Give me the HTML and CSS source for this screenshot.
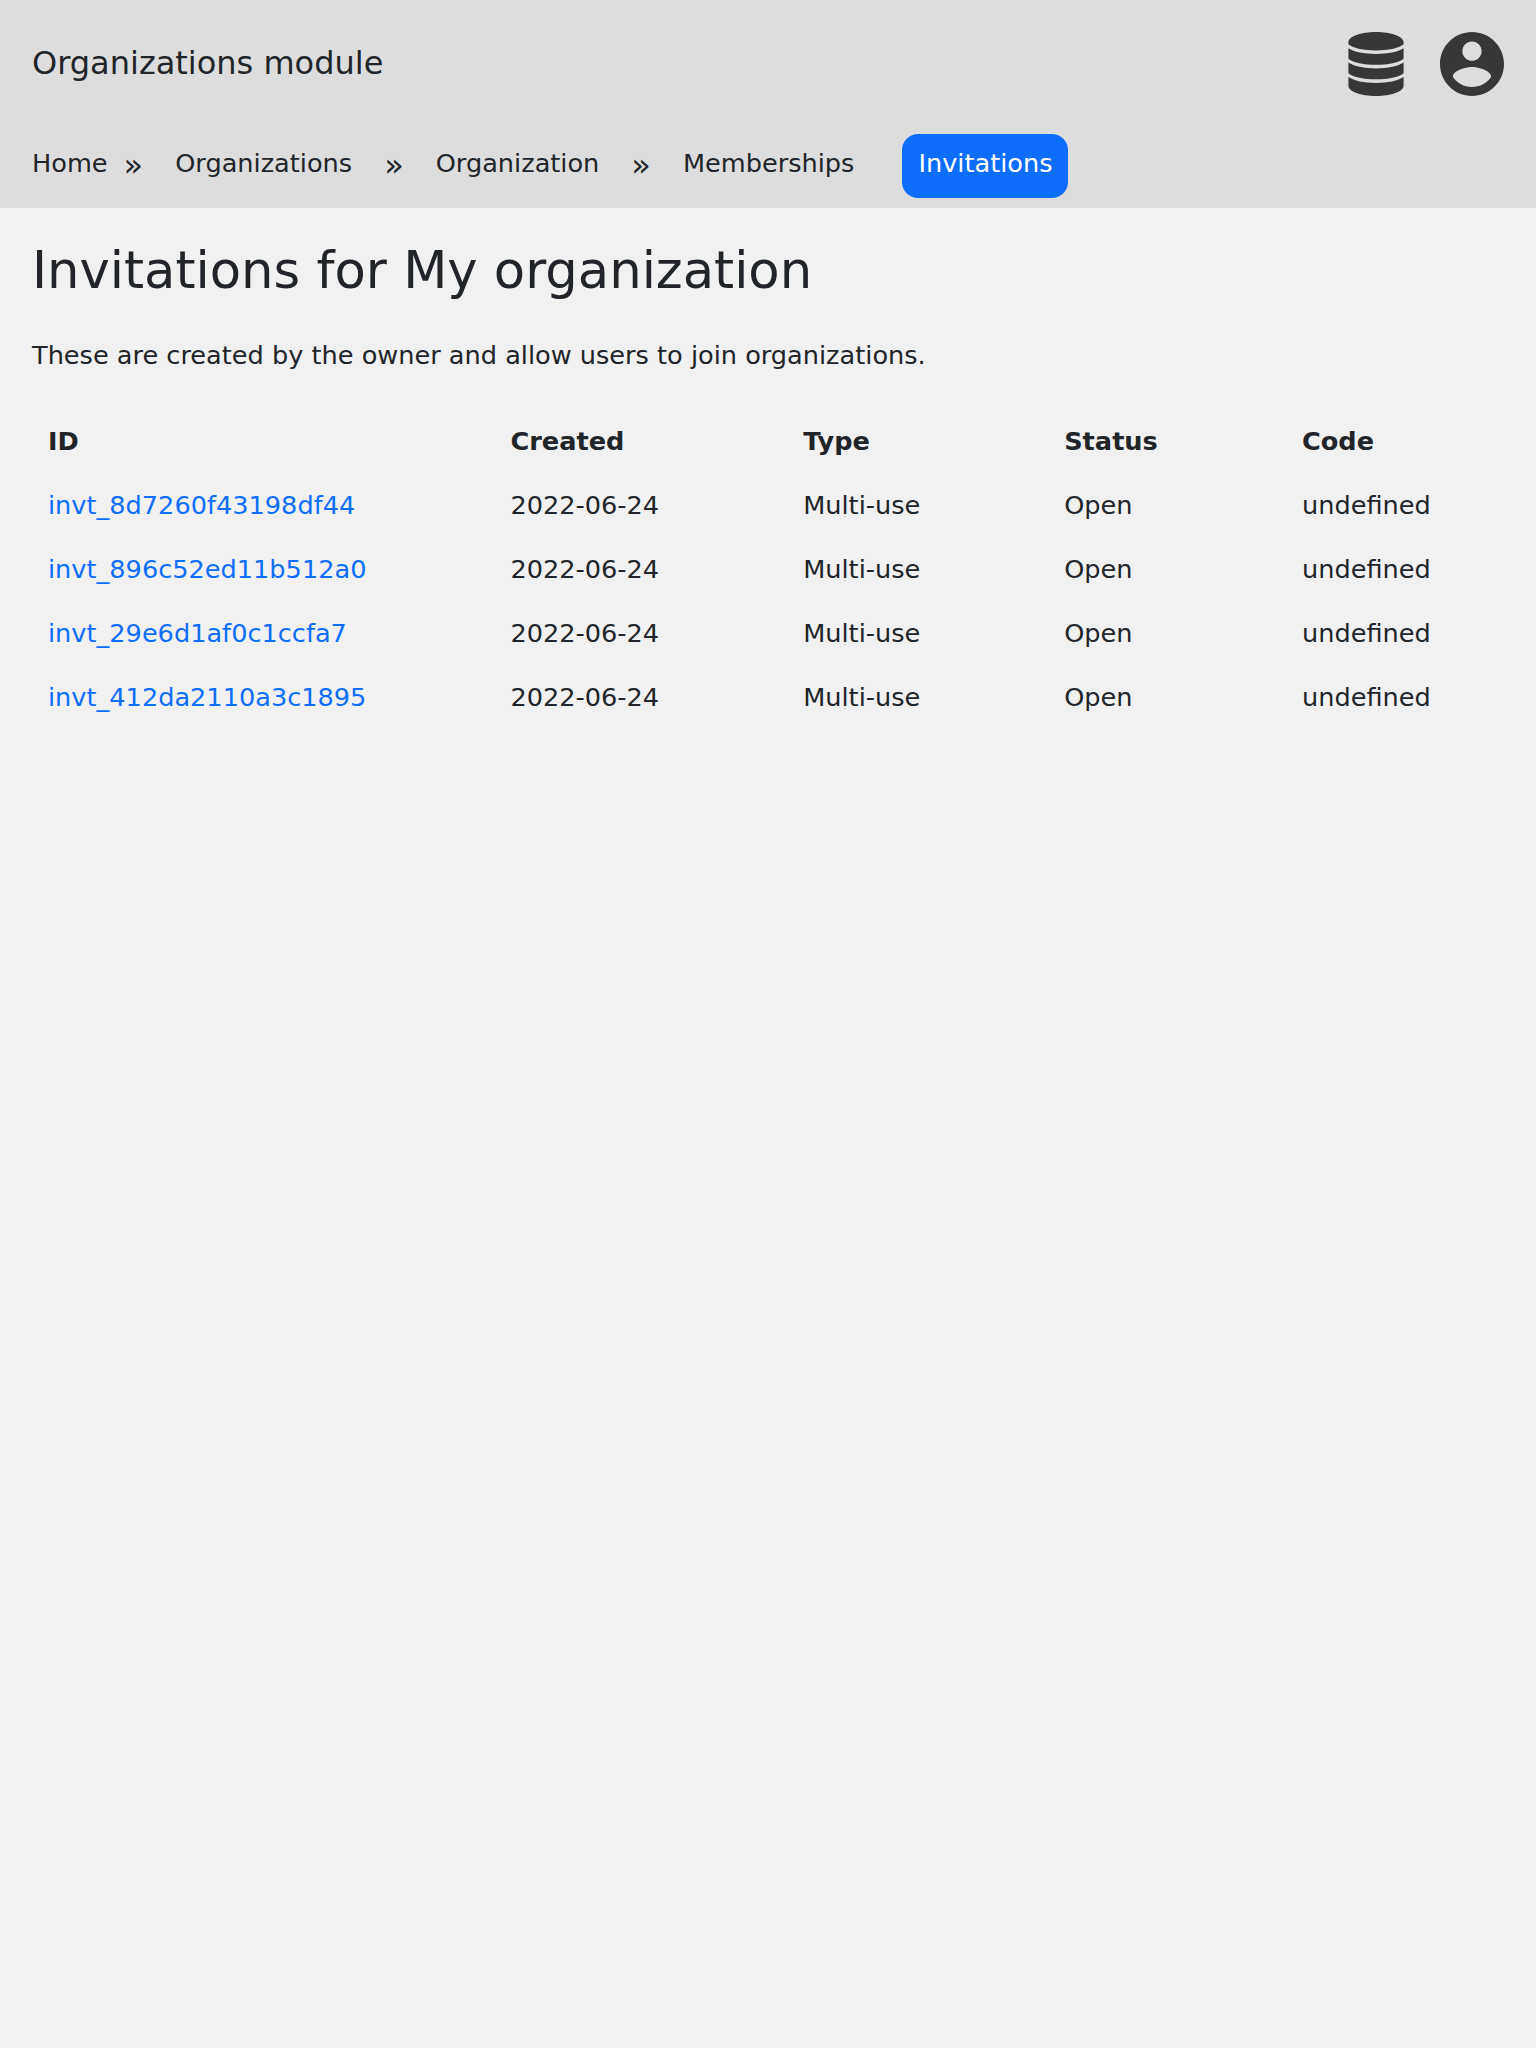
FILE: index.html
```html
<!DOCTYPE html>
<html lang="en">
<head>
<meta charset="utf-8">
<title>Invitations</title>
<link rel="stylesheet" href="styles.css">
</head>
<body>
<header class="header">
  <div class="topbar">
    <div class="title">Organizations module</div>
    <div class="icons">
      <svg class="icon-db" viewBox="0 0 56 64"><path d="M28 0C43.200 0 55.600 4.500 55.600 10.300V12.300C50.500 16.400 40 18.500 28 18.500S5.500 16.400 .4 12.300V10.300C.4 4.500 12.800 0 28 0zM.4 16.200C6 19.900 16 21.900 28 21.900S50 19.900 55.600 16.200V26.800C50.500 30.800 40 32.800 28 32.800S5.500 30.800 .4 26.800zM.4 30.600C6 34.400 16 36.400 28 36.400S50 34.400 55.600 30.600V41.200C50.500 45.200 40 47.200 28 47.200S5.500 45.200 .4 41.200zM.4 45C6 48.900 16 50.900 28 50.900S50 48.900 55.600 45V53.700C55.600 59.500 43.200 64 28 64S.4 59.500 .4 53.700z"/></svg>
      <svg class="icon-user" viewBox="2 2 20 20"><path d="M12 2C6.480 2 2 6.480 2 12s4.480 10 10 10 10-4.480 10-10S17.520 2 12 2zm0 3c1.660 0 3 1.340 3 3s-1.340 3-3 3-3-1.340-3-3 1.340-3 3-3zm0 14.200c-2.500 0-4.710-1.280-6-3.220.030-1.990 4-3.080 6-3.080 1.990 0 5.970 1.090 6 3.080-1.290 1.940-3.500 3.220-6 3.220z"/></svg>
    </div>
  </div>
  <nav class="nav">
    <a class="home">Home</a><span class="sep">»</span>
    <a class="crumb">Organizations</a><span class="sep">»</span>
    <a class="crumb">Organization</a><span class="sep">»</span>
    <a class="crumb">Memberships</a>
    <a class="current">Invitations</a>
  </nav>
</header>
<main class="main">
  <h1>Invitations for My organization</h1>
  <p>These are created by the owner and allow users to join organizations.</p>
  <table class="table">
    <colgroup><col class="col-id"><col class="col-created"><col class="col-type"><col class="col-status"><col></colgroup>
    <thead><tr><th>ID</th><th>Created</th><th>Type</th><th>Status</th><th>Code</th></tr></thead>
    <tbody>
      <tr><td><a>invt_8d7260f43198df44</a></td><td>2022-06-24</td><td>Multi-use</td><td>Open</td><td>undefined</td></tr>
      <tr><td><a>invt_896c52ed11b512a0</a></td><td>2022-06-24</td><td>Multi-use</td><td>Open</td><td>undefined</td></tr>
      <tr><td><a>invt_29e6d1af0c1ccfa7</a></td><td>2022-06-24</td><td>Multi-use</td><td>Open</td><td>undefined</td></tr>
      <tr><td><a>invt_412da2110a3c1895</a></td><td>2022-06-24</td><td>Multi-use</td><td>Open</td><td>undefined</td></tr>
    </tbody>
  </table>
</main>
</body>
</html>
```
FILE: styles.css
```css
* { box-sizing: border-box; }
body {
  margin: 0;
  background: #f1f1f1;
  color: #212529;
  font: 25.6px/38.4px "DejaVu Sans", sans-serif;
}
.header { height: 208px; background: #ddd; }
.topbar {
  display: flex;
  justify-content: space-between;
  align-items: center;
  height: 128px;
  padding: 0 32px;
}
.title { padding-bottom: 2px; font-size: 32px; line-height: 48px; }
.icons { display: flex; gap: 36px; fill: #373737; }
.icon-db { width: 56px; height: 64px; }
.icon-user { width: 64px; height: 64px; }
.nav {
  display: flex;
  align-items: flex-start;
  padding: 6px 32px 0;
}
.home, .crumb { padding-top: 10px; }
.sep { margin: 0 32px; padding-top: 7px; font-size: 32px; line-height: 48px; }
.home + .sep { margin-left: 16px; }
.current {
  width: 166px;
  height: 64px;
  margin-left: 48px;
  padding: 10px 0 0 16px;
  border-radius: 16px;
  background: #0d6efd;
  color: #fff;
}
.main { padding: 32px; }
h1 { margin: 0 0 35px; font-size: 51.2px; line-height: 61px; font-weight: 400; }
p { margin: 0 0 35px; line-height: 38px; }
.table { width: 100%; table-layout: fixed; border-collapse: collapse; }
.col-id { width: 462.4px; }
.col-created { width: 292.8px; }
.col-type { width: 261px; }
.col-status { width: 237.8px; }
th, td { height: 64px; padding: 0 16px; text-align: left; }
td a { color: #0d6efd; }
```
